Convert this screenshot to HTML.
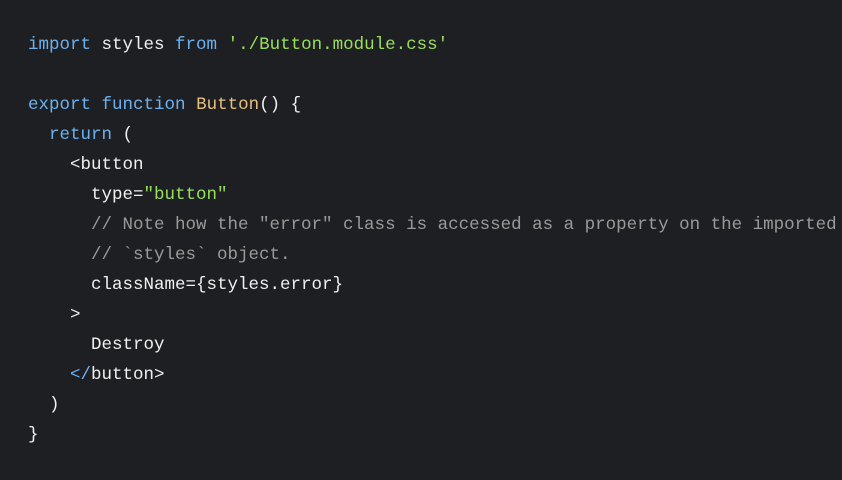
<!DOCTYPE html>
<html><head><style>
html,body{margin:0;padding:0;background:#1e1f22;width:842px;height:480px;overflow:hidden}
pre{margin:0;position:absolute;left:28px;top:30px;font-family:"Liberation Mono",monospace;font-size:17.5px;line-height:30px;color:#f0f0f0;white-space:pre}
.k{color:#6cb2f0}.s{color:#98e05a}.f{color:#e6c07b}.c{color:#9a9a9a}
</style></head><body>
<pre><span class="k">import</span> styles <span class="k">from</span> <span class="s">'./Button.module.css'</span>

<span class="k">export</span> <span class="k">function</span> <span class="f">Button</span>() {
  <span class="k">return</span> (
    &lt;button
      type=<span class="s">"button"</span>
      <span class="c">// Note how the "error" class is accessed as a property on the imported</span>
      <span class="c">// `styles` object.</span>
      className={styles.error}
    &gt;
      Destroy
    <span class="k">&lt;/</span>button&gt;
  )
}</pre>
</body></html>
